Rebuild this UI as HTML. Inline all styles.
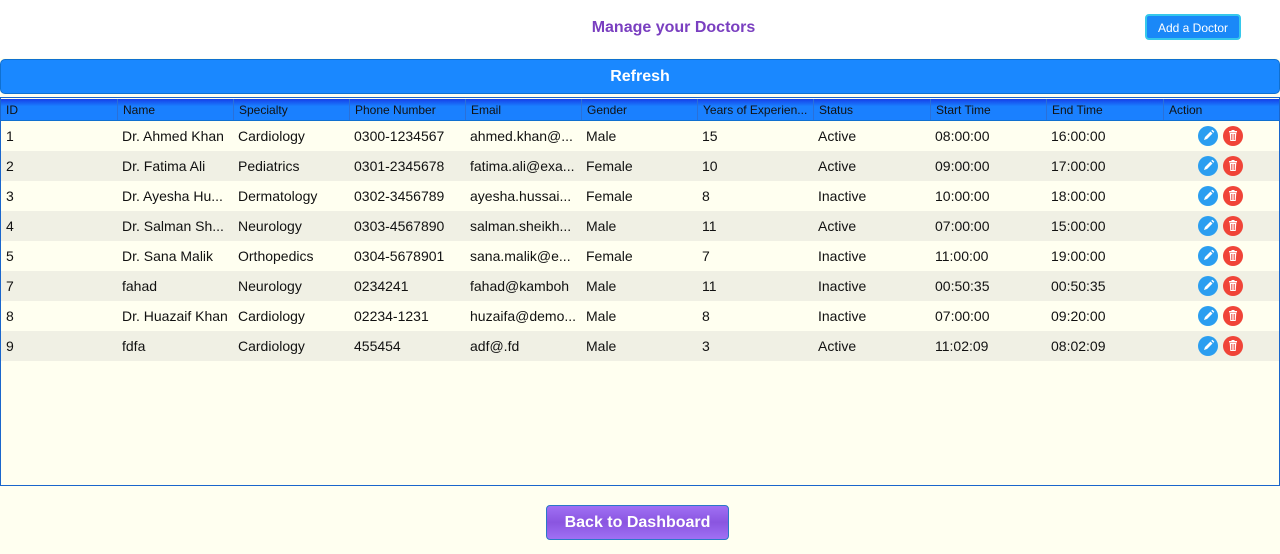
<!DOCTYPE html>
<html><head><meta charset="utf-8"><style>
*{margin:0;padding:0;box-sizing:border-box}
body{width:1280px;height:554px;background:#fffff0;font-family:"Liberation Sans",Arial,sans-serif;position:relative;overflow:hidden}
.top{position:absolute;left:0;top:0;width:1280px;height:58px;background:#fff}
h1{position:absolute;top:19px;left:0;width:1347px;text-align:center;font-size:16px;color:#7a3fc0;font-weight:bold}
.add{position:absolute;left:1145px;top:14px;width:96px;height:26px;background:#1a88f8;border:2px solid #36c8ec;border-radius:4px;color:#fff;font-size:12px;text-align:center;line-height:24px}
.refresh{position:absolute;left:0;top:59px;width:1280px;height:35px;background:#1a88ff;border:1px solid #1070d0;border-radius:5px;color:#fff;font-weight:bold;font-size:16px;text-align:center;line-height:33px}
.tbl{position:absolute;left:0;top:97px;width:1280px;height:389px;border:1px solid #1a66cc;background:#fffff0}
.hd{position:absolute;left:0;top:1px;width:1278px;height:22px;background:linear-gradient(#1540e8,#1a80ff 35%,#1a80ff);border-bottom:1px solid #1070d0}
.c{position:absolute;top:0;height:100%;font-size:12px;padding-left:5px;white-space:nowrap;overflow:hidden}
.hd .c{line-height:23px;border-left:1px solid #2a70d8;color:#111}
.row{position:absolute;left:1px;width:1278px;height:30px;font-size:14px;line-height:30px;color:#111}
.row .c{font-size:14px}
.row.a{background:#fffff0}.row.b{background:#f0f0e4}
.ic{position:absolute;top:5px;width:20px;height:20px;border-radius:50%}
.e{left:1197px;background:#2b9ef0}.d{left:1222px;background:#f04438}
.back{position:absolute;left:546px;top:505px;width:183px;height:35px;background:linear-gradient(#a070f4,#8a55e0 50%,#a070f4);border:1px solid #2a78c8;border-radius:4px;color:#fff;font-weight:bold;font-size:16px;text-align:center;line-height:33px}
</style></head><body>
<div class="top"></div>
<h1>Manage your Doctors</h1>
<div class="add">Add a Doctor</div>
<div class="refresh">Refresh</div>
<div class="tbl">
<div class="hd">
<div class="c" style="left:0;width:116px;border-left:none">ID</div>
<div class="c" style="left:116px;width:116px">Name</div>
<div class="c" style="left:232px;width:116px">Specialty</div>
<div class="c" style="left:348px;width:116px">Phone Number</div>
<div class="c" style="left:464px;width:116px">Email</div>
<div class="c" style="left:580px;width:116px">Gender</div>
<div class="c" style="left:696px;width:116px">Years of Experien...</div>
<div class="c" style="left:812px;width:117px">Status</div>
<div class="c" style="left:929px;width:116px">Start Time</div>
<div class="c" style="left:1045px;width:117px">End Time</div>
<div class="c" style="left:1162px;width:116px">Action</div>
</div>
</div>
<div id="rows"></div>
<div class="back">Back to Dashboard</div>
<script>
var d=[["1","Dr. Ahmed Khan","Cardiology","0300-1234567","ahmed.khan@...","Male","15","Active","08:00:00","16:00:00"],
["2","Dr. Fatima Ali","Pediatrics","0301-2345678","fatima.ali@exa...","Female","10","Active","09:00:00","17:00:00"],
["3","Dr. Ayesha Hu...","Dermatology","0302-3456789","ayesha.hussai...","Female","8","Inactive","10:00:00","18:00:00"],
["4","Dr. Salman Sh...","Neurology","0303-4567890","salman.sheikh...","Male","11","Active","07:00:00","15:00:00"],
["5","Dr. Sana Malik","Orthopedics","0304-5678901","sana.malik@e...","Female","7","Inactive","11:00:00","19:00:00"],
["7","fahad","Neurology","0234241","fahad@kamboh","Male","11","Inactive","00:50:35","00:50:35"],
["8","Dr. Huazaif Khan","Cardiology","02234-1231","huzaifa@demo...","Male","8","Inactive","07:00:00","09:20:00"],
["9","fdfa","Cardiology","455454","adf@.fd","Male","3","Active","11:02:09","08:02:09"]];
var L=[0,116,232,348,464,580,696,812,929,1045],h="";
var pen='<svg width="20" height="20" viewBox="0 0 20 20"><path d="M6 14l1-3 5.5-5.5 2 2L9 13z M13.3 4.7l1-1 2 2-1 1z" fill="#fff"/></svg>';
var bin='<svg width="20" height="20" viewBox="0 0 20 20"><rect x="6" y="5" width="8" height="1.5" fill="#fff"/><rect x="8.5" y="4" width="3" height="1.2" fill="#fff"/><path d="M6.7 7h6.6l-.6 8H7.3z" fill="#fff"/><path d="M8.6 8v6M10 8v6M11.4 8v6" stroke="#f04438" stroke-width=".7"/></svg>';
d.forEach(function(r,i){h+='<div class="row '+(i%2?'b':'a')+'" style="top:'+(121+i*30)+'px">';
r.forEach(function(v,j){h+='<div class="c" style="left:'+L[j]+'px;width:116px">'+v+'</div>'});
h+='<div class="ic e">'+pen+'</div><div class="ic d">'+bin+'</div></div>'});
document.getElementById('rows').innerHTML=h;
</script>
</body></html>
